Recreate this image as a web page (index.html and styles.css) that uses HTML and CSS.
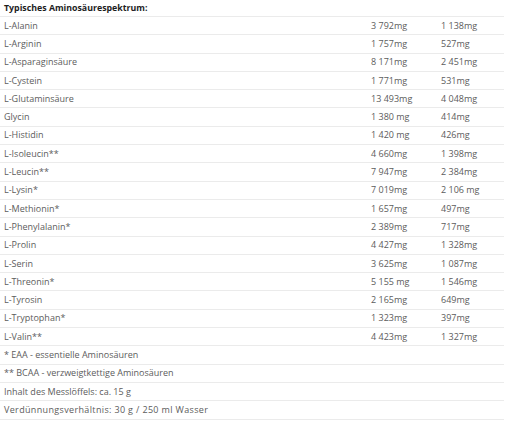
FILE: index.html
```html
<!DOCTYPE html>
<html lang="de">
<head>
<meta charset="utf-8">
<link rel="stylesheet" href="styles.css">
</head>
<body>
<div class="wrap">
  <div class="title">Typisches Aminosäurespektrum:</div>
  <table class="amino">
    <tbody>
      <tr><td class="name">L-Alanin</td><td class="v1">3 792mg</td><td class="v2">1 138mg</td></tr>
      <tr><td class="name">L-Arginin</td><td class="v1">1 757mg</td><td class="v2">527mg</td></tr>
      <tr><td class="name">L-Asparaginsäure</td><td class="v1">8 171mg</td><td class="v2">2 451mg</td></tr>
      <tr><td class="name">L-Cystein</td><td class="v1">1 771mg</td><td class="v2">531mg</td></tr>
      <tr><td class="name">L-Glutaminsäure</td><td class="v1">13 493mg</td><td class="v2">4 048mg</td></tr>
      <tr><td class="name">Glycin</td><td class="v1">1 380 mg</td><td class="v2">414mg</td></tr>
      <tr><td class="name">L-Histidin</td><td class="v1">1 420 mg</td><td class="v2">426mg</td></tr>
      <tr><td class="name">L-Isoleucin**</td><td class="v1">4 660mg</td><td class="v2">1 398mg</td></tr>
      <tr><td class="name">L-Leucin**</td><td class="v1">7 947mg</td><td class="v2">2 384mg</td></tr>
      <tr><td class="name">L-Lysin*</td><td class="v1">7 019mg</td><td class="v2">2 106 mg</td></tr>
      <tr><td class="name">L-Methionin*</td><td class="v1">1 657mg</td><td class="v2">497mg</td></tr>
      <tr><td class="name">L-Phenylalanin*</td><td class="v1">2 389mg</td><td class="v2">717mg</td></tr>
      <tr><td class="name">L-Prolin</td><td class="v1">4 427mg</td><td class="v2">1 328mg</td></tr>
      <tr><td class="name">L-Serin</td><td class="v1">3 625mg</td><td class="v2">1 087mg</td></tr>
      <tr><td class="name">L-Threonin*</td><td class="v1">5 155 mg</td><td class="v2">1 546mg</td></tr>
      <tr><td class="name">L-Tyrosin</td><td class="v1">2 165mg</td><td class="v2">649mg</td></tr>
      <tr><td class="name">L-Tryptophan*</td><td class="v1">1 323mg</td><td class="v2">397mg</td></tr>
      <tr><td class="name">L-Valin**</td><td class="v1">4 423mg</td><td class="v2">1 327mg</td></tr>
      <tr><td class="name" colspan="3">* EAA - essentielle Aminosäuren</td></tr>
      <tr><td class="name" colspan="3">** BCAA - verzweigtkettige Aminosäuren</td></tr>
      <tr><td class="name" colspan="3">Inhalt des Messlöffels: ca. 15 g</td></tr>
      <tr><td class="name" colspan="3"><span class="wide">Verdünnungsverhältnis: 30 g / 250 ml Wasser</span></td></tr>
    </tbody>
  </table>
</div>
</body>
</html>
```
FILE: styles.css
```css
html, body {
  margin: 0;
  padding: 0;
  background: #ffffff;
}
body {
  font-family: "Open Sans", "Liberation Sans", sans-serif;
  color: #5c5c5c;
  font-size: 9px;
}
.wrap {
  width: 504px;
}
.title {
  height: 16px;
  line-height: 17px;
  padding-left: 4px;
  font-weight: 700;
  color: #1e1e1e;
  font-size: 8.8px;
}
.amino {
  width: 504px;
  border-collapse: collapse;
}
.amino td {
  height: 17.3px;
  padding: 0 0 0 4px;
  border-top: 1px solid #ebebeb;
  border-bottom: 1px solid #ebebeb;
  white-space: nowrap;
  vertical-align: middle;
  line-height: 12px;
}
.amino .name {
  width: 363px;
}
.amino .v1 {
  width: 66px;
}
.amino .v2 {
  width: auto;
}
.wide {
  letter-spacing: 0.35px;
}
```
